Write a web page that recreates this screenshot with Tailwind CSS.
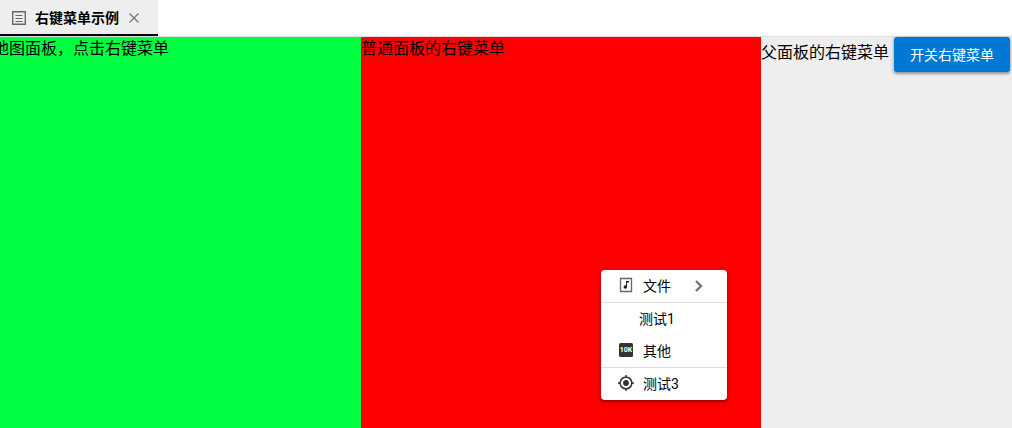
<!DOCTYPE html>
<html lang="zh-CN">
<head>
<meta charset="utf-8">
<meta name="viewport" content="width=device-width, initial-scale=1">
<title>右键菜单示例</title>
<script src="https://cdn.jsdelivr.net/npm/@tailwindcss/browser@4"></script>
</head>
<body class="flex h-screen flex-col overflow-hidden bg-white font-['Roboto','Noto_Sans_CJK_SC',sans-serif] text-base text-black">
  <header class="flex h-[37px] shrink-0 border-b border-[#dddddd]">
    <div class="flex items-center border-b-2 border-black bg-[#eeeeee] pt-0.5 pr-[18px] pl-3">
      <button type="button" class="flex items-center text-sm font-bold">
        <svg class="mr-[9px] size-[14px]" viewBox="0 0 14 14" fill="none" stroke="#666666" aria-hidden="true">
          <path d="M.7.7h12.6v12.6H.7z" stroke-width="1.4"/>
          <path d="M3.5 4.5h7M3.5 7.5h7M3.5 10.5h7"/>
        </svg>
        <span>右键菜单示例</span>
      </button>
      <button type="button" aria-label="关闭" class="ml-[9px]">
        <svg class="size-3" viewBox="0 0 12 12" fill="none" stroke="#777777" stroke-width="1.3" aria-hidden="true"><path d="m1.5 1.5 9 9m0-9-9 9"/></svg>
      </button>
    </div>
  </header>

  <main class="flex flex-1 bg-[#eeeeee]">
    <section class="-ml-[7px] w-[368px] shrink-0 bg-[#00ff40] leading-6">地图面板，点击右键菜单</section>
    <section class="w-[400px] shrink-0 bg-[#ff0000] leading-6">普通面板的右键菜单</section>
    <section class="flex flex-1 items-start whitespace-nowrap">
      <span class="py-1 leading-6">父面板的右键菜单</span>
      <button type="button" class="ml-[5px] h-[35px] rounded-[3px] bg-[#0078d4] px-4 text-sm text-white shadow-[0_1px_4px_rgba(0,0,0,0.3),0_2px_2px_rgba(0,0,0,0.2)]">开关右键菜单</button>
    </section>
  </main>

  <div role="menu" class="absolute top-[270px] left-[601px] w-[126px] rounded bg-white text-sm shadow-[0_1px_5px_rgba(0,0,0,0.3),0_2px_2px_rgba(0,0,0,0.2)]">
    <button type="button" role="menuitem" aria-haspopup="true" class="flex h-8 w-full items-center pl-[17px]">
      <svg class="mb-0.5 size-4" viewBox="0 0 16 16" aria-hidden="true">
        <path d="M2.5 1.5h11v13h-11z" fill="none" stroke="#666666" stroke-width="1.3"/>
        <path d="M8 4h3v1.5H9V10a1.7 1.7 0 1 1-1-1.6z" fill="#222222"/>
      </svg>
      <span class="ml-[9px]">文件</span>
      <svg class="ml-6 h-3 w-2" viewBox="0 0 8 12" fill="none" stroke="#757575" stroke-width="2.4" aria-hidden="true"><path d="m1 1 5 5-5 5"/></svg>
    </button>
    <hr class="border-[#dddddd]">
    <button type="button" role="menuitem" class="flex h-8 w-full items-center pl-[38px]">测试1</button>
    <button type="button" role="menuitem" class="flex h-8 w-full items-center pl-[17px]">
      <svg class="mb-0.5 size-4" viewBox="0 0 16 16" aria-hidden="true">
        <rect x="1" y="1" width="14" height="14" rx="1.5" fill="#333333"/>
        <text x="8" y="10" text-anchor="middle" font-size="7" font-weight="700" fill="#ffffff">10K</text>
      </svg>
      <span class="ml-[9px]">其他</span>
    </button>
    <hr class="border-[#dddddd]">
    <button type="button" role="menuitem" class="flex h-8 w-full items-center pl-[17px]">
      <svg class="mb-0.5 size-4" viewBox="1 1 22 22" fill="#333333" aria-hidden="true">
        <path d="M12 8a4 4 0 1 0 0 8 4 4 0 0 0 0-8m8.94 3A8.99 8.99 0 0 0 13 3.06V1h-2v2.06A8.99 8.99 0 0 0 3.06 11H1v2h2.06A8.99 8.99 0 0 0 11 20.94V23h2v-2.06A8.99 8.99 0 0 0 20.94 13H23v-2zM12 19a7 7 0 1 1 0-14 7 7 0 0 1 0 14"/>
      </svg>
      <span class="ml-[9px]">测试3</span>
    </button>
  </div>
</body>
</html>
